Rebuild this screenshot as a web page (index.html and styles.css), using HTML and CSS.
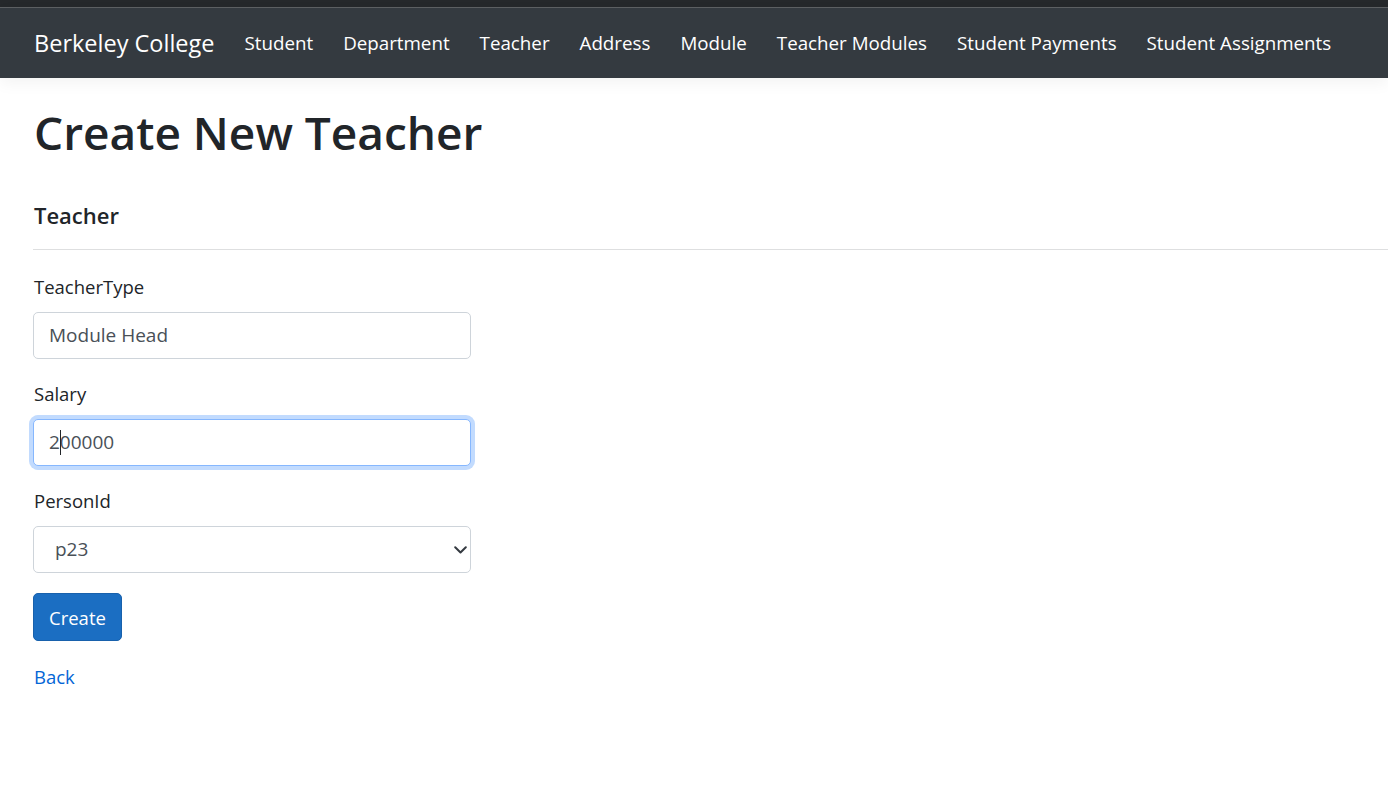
FILE: index.html
```html
<!DOCTYPE html>
<html lang="en">
<head>
<meta charset="utf-8">
<title>Create - Berkeley College</title>
<link rel="stylesheet" href="styles.css">
</head>
<body>
<div class="topstrip"></div>
<header class="navbar">
  <a class="brand" href="#">Berkeley College</a>
  <nav class="nav">
    <a href="#">Student</a>
    <a href="#">Department</a>
    <a href="#">Teacher</a>
    <a href="#">Address</a>
    <a href="#">Module</a>
    <a href="#">Teacher Modules</a>
    <a href="#">Student Payments</a>
    <a href="#">Student Assignments</a>
  </nav>
</header>
<main class="content">
  <h1 class="title">Create New Teacher</h1>
  <h4 class="subtitle">Teacher</h4>
  <hr class="rule">
  <form class="form">
    <div class="group">
      <label class="label">TeacherType</label>
      <input class="control" type="text" value="Module Head">
    </div>
    <div class="group">
      <label class="label">Salary</label>
      <div class="field">
        <input class="control focused" type="text" value="200000">
        <span class="caret"></span>
      </div>
    </div>
    <div class="group">
      <label class="label">PersonId</label>
      <div class="field">
        <select class="control select">
          <option>p23</option>
        </select>
        <svg class="chev" width="13" height="8" viewBox="0 0 13 8"><path d="M1.2 1.2l5.3 5.3 5.3-5.3" fill="none" stroke="#343a40" stroke-width="2" stroke-linecap="round" stroke-linejoin="round"/></svg>
      </div>
    </div>
    <button class="btn" type="button">Create</button>
  </form>
  <div class="back"><a href="#">Back</a></div>
</main>
</body>
</html>
```

FILE: styles.css
```css
html, body {
  margin: 0;
  padding: 0;
  background: #fff;
}
body {
  font-family: "Open Sans", "Noto Sans", sans-serif;
  color: #212529;
  font-size: 18.5px;
  line-height: 30px;
  overflow-x: hidden;
}
.topstrip {
  height: 7px;
  background: #25282b;
  border-bottom: 1px solid #5e6164;
}
.navbar {
  position: relative;
  z-index: 2;
  height: 70px;
  background: #343a40;
  display: flex;
  align-items: center;
  padding-left: 34px;
  box-shadow: 0 5px 15px rgba(0, 0, 0, 0.05);
  white-space: nowrap;
}
.brand {
  flex-shrink: 0;
  color: #fff;
  text-decoration: none;
  font-size: 23.5px;
  margin-right: 30px;
}
.nav {
  display: flex;
  gap: 30px;
}
.nav a {
  flex-shrink: 0;
  color: #fff;
  text-decoration: none;
  font-size: 18.75px;
}
.content {
  padding-left: 34px;
}
.title {
  margin: 25px 0 0;
  font-size: 46px;
  line-height: 58px;
  font-weight: 600;
  color: #212529;
}
.subtitle {
  margin: 39px 0 0;
  font-size: 22px;
  line-height: 31px;
  font-weight: 600;
  color: #212529;
}
.rule {
  margin: 18px 0 0 -1px;
  border: 0;
  border-top: 1px solid #dedfe0;
}
.form {
  width: 438px;
  margin-top: 22px;
}
.group {
  margin-bottom: 20px;
}
.label {
  display: block;
  margin-bottom: 9.5px;
}
.field {
  position: relative;
}
.control {
  display: block;
  box-sizing: border-box;
  width: 438px;
  height: 47.5px;
  margin-left: -1px;
  padding: 0 15px;
  border: 1px solid #ced4da;
  border-radius: 5px;
  font-family: inherit;
  font-size: 19px;
  color: #495057;
  background: #fff;
  outline: none;
}
.focused {
  border-color: #86b7fe;
  box-shadow: 0 0 0 4px rgba(13, 110, 253, 0.25);
}
.caret {
  position: absolute;
  left: 26px;
  top: 11px;
  width: 1px;
  height: 25px;
  background: #212529;
}
.select {
  appearance: none;
  -webkit-appearance: none;
  padding-left: 21px;
}
.chev {
  position: absolute;
  right: 5px;
  top: 20px;
}
.btn {
  display: block;
  box-sizing: border-box;
  height: 48px;
  margin-left: -1px;
  padding: 0 15px;
  border: 1px solid #1861ac;
  border-radius: 5px;
  background: #1b6ec2;
  color: #fff;
  font-family: inherit;
  font-size: 18.5px;
}
.back {
  margin-top: 21px;
}
.back a {
  color: #0366d6;
  text-decoration: none;
}
```
